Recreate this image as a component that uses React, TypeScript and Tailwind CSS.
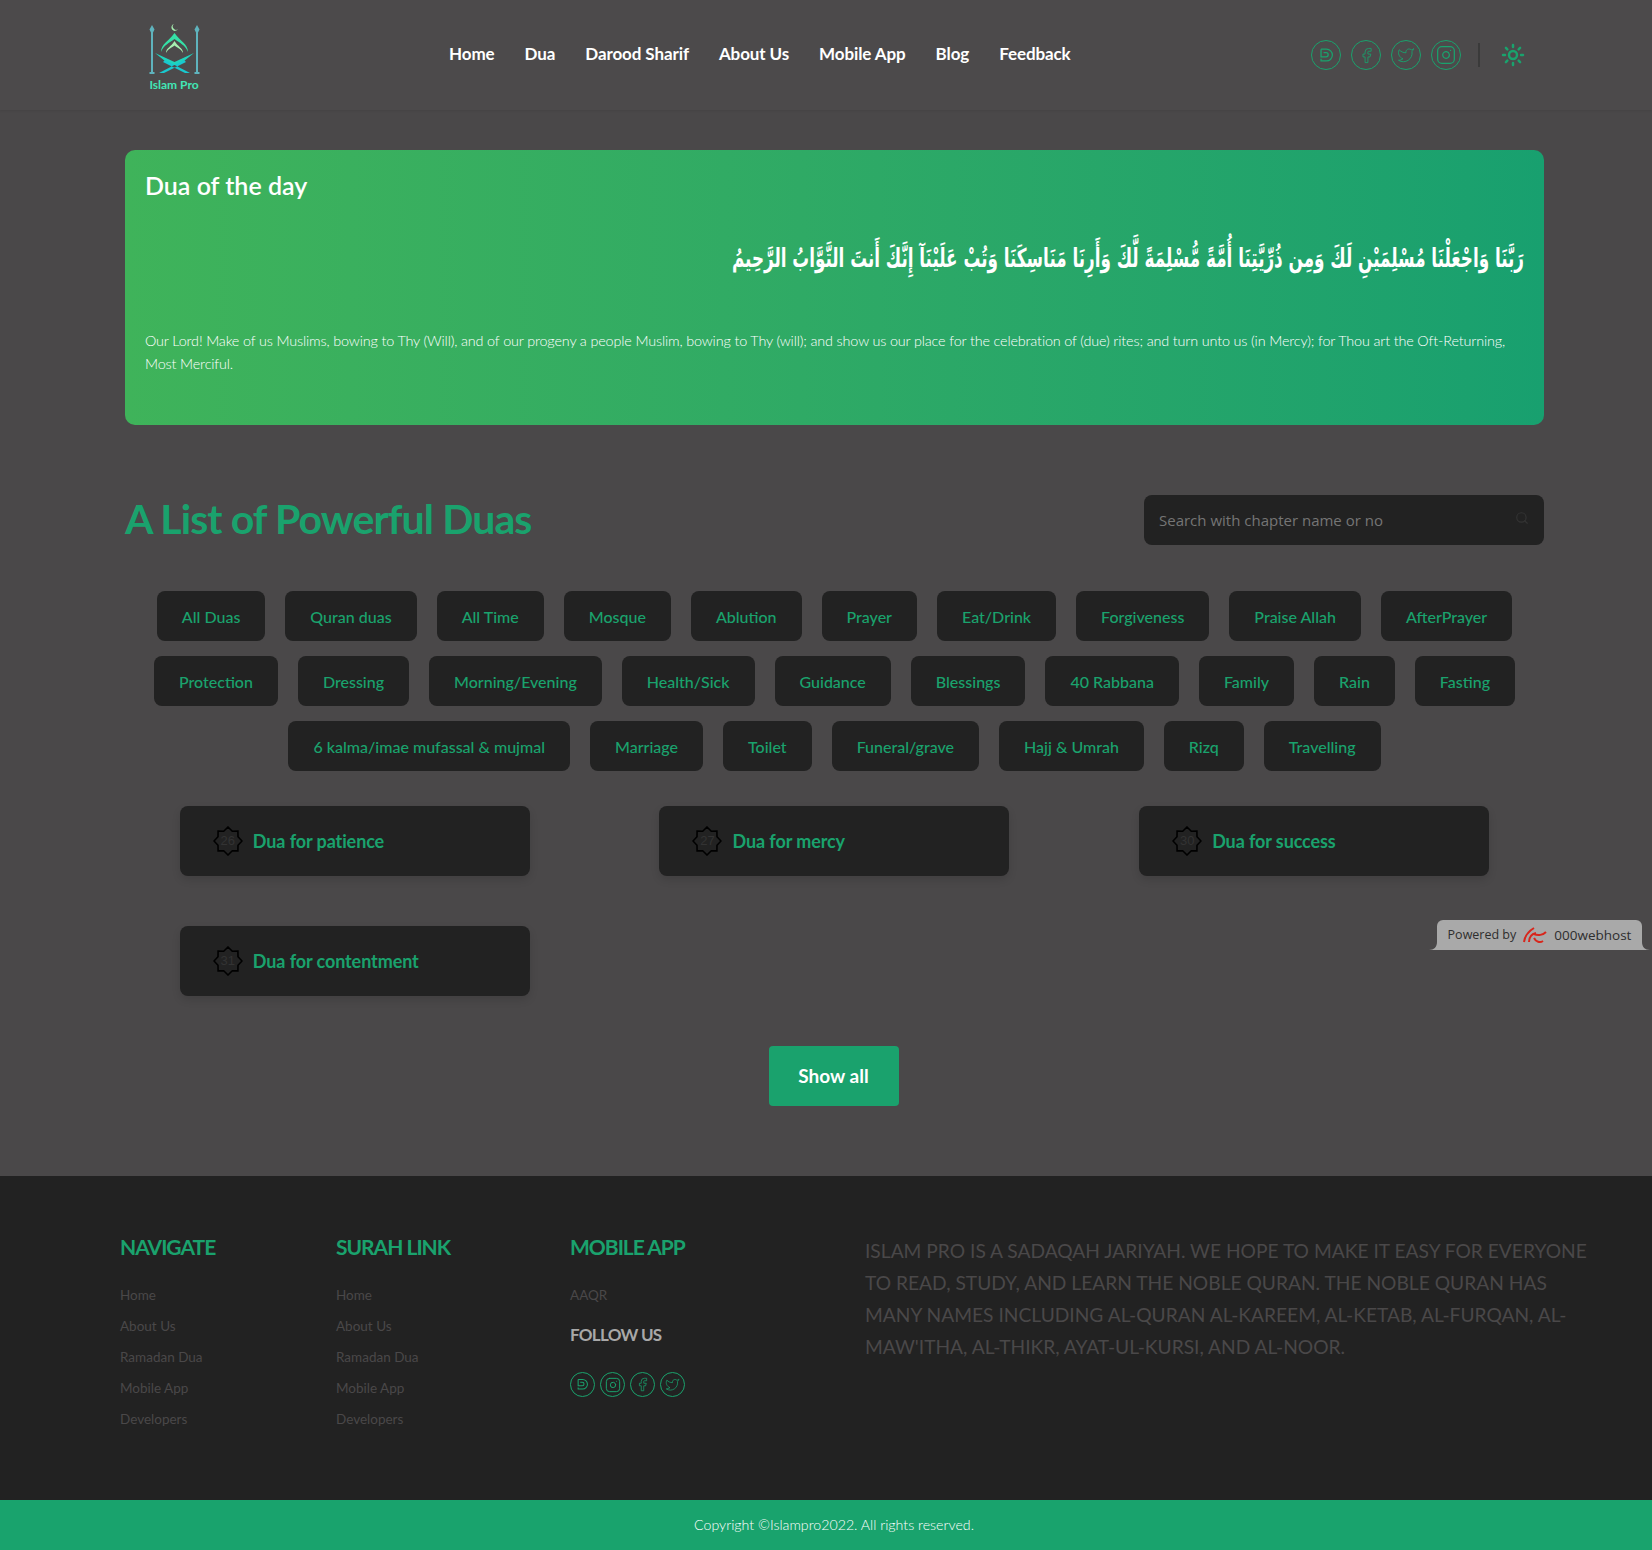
import { Facebook, Instagram, Search, Sun, Twitter } from "lucide-react";

const navLinks = ["Home", "Dua", "Darood Sharif", "About Us", "Mobile App", "Blog", "Feedback"];

const tabRows = [
  ["All Duas", "Quran duas", "All Time", "Mosque", "Ablution", "Prayer", "Eat/Drink", "Forgiveness", "Praise Allah", "AfterPrayer"],
  ["Protection", "Dressing", "Morning/Evening", "Health/Sick", "Guidance", "Blessings", "40 Rabbana", "Family", "Rain", "Fasting"],
  ["6 kalma/imae mufassal & mujmal", "Marriage", "Toilet", "Funeral/grave", "Hajj & Umrah", "Rizq", "Travelling"],
];

const duas = [
  { no: 26, title: "Dua for patience" },
  { no: 27, title: "Dua for mercy" },
  { no: 30, title: "Dua for success" },
  { no: 31, title: "Dua for contentment" },
];

const footerLinks = ["Home", "About Us", "Ramadan Dua", "Mobile App", "Developers"];

const DevIcon = () => (
  <svg viewBox="0 0 24 24" className="h-[72%] w-[72%]" fill="none" stroke="currentColor" strokeWidth="1.500">
    <path d="M6 5h6.500a7 7 0 0 1 0 14H6v-2.500M6 5v9h6a2.500 2.500 0 0 0 0-5H9" />
  </svg>
);

const Circle = ({ size, children }: { size: string; children: React.ReactNode }) => (
  <span className={`flex items-center justify-center rounded-full border border-[#1aa26d] text-[#1aa26d] ${size}`}>
    {children}
  </span>
);

const Logo = () => (
  <div className="mt-[6px] flex w-[56px] flex-col items-center">
    <svg viewBox="0 0 56 50" className="h-[50px] w-[56px]" fill="none">
      <path d="M6 1l2.500 4.500-1.500 3V48h1.500v2h-5v-2H5V8.500L3.500 5.500z" fill="#5fb3bd" />
      <path d="M51 1l2.500 4.500-1.500 3V48h1.500v2h-5v-2H50V8.500L48.500 5.500z" fill="#5fb3bd" />
      <path d="M28 0a3.500 3.500 0 1 0 4 5 3 3 0 0 1-4-5z" fill="#a6efb0" />
      <path d="M15 28c0-8 8-11 13.500-19C34 17 42 20 42 28c-3-7-8-9-13.500-13C23 19 18 21 15 28z" fill="#35e0a6" />
      <path d="M20 29c0-5 5-6 8.500-12C32 23 37 24 37 29c-2-4-5-5-8.500-7.500C25 24 22 25 20 29z" fill="#a6efb0" />
      <path d="M9 29l19.500 9L48 29l-15 12h-9z" fill="#1fd4bd" />
      <path d="M13 49l25-13 2 2-22 11zM44 49L19 36l-2 2 22 11z" fill="#19c8cf" />
    </svg>
    <span className="mt-[4px] text-[12px] leading-[14px] font-bold text-[#42e6b5]">Islam Pro</span>
  </div>
);

const StarBadge = ({ no }: { no: number }) => (
  <span className="relative flex h-[30px] w-[30px] items-center justify-center">
    <svg viewBox="0 0 30 30" className="absolute inset-0 h-full w-full" fill="none" stroke="#000" strokeWidth="1.600">
      <path d="M15 1l4.300 4.200 5.600-.1.100 5.600L29 15l-4 4.300-.100 5.600-5.600-.1L15 29l-4.300-4.200-5.600.1-.1-5.600L1 15l4-4.300.1-5.600 5.600.1z" />
    </svg>
    <span className="font-['Liberation_Sans',sans-serif] text-[13px] text-[#333]">{no}</span>
  </span>
);

const FooterColumn = ({ title, width }: { title: string; width: string }) => (
  <div className={width}>
    <h4 className="text-[21px] leading-[30px] font-bold tracking-[-1px] text-[#1aa26d] uppercase">{title}</h4>
    <ul className="mt-[23px] flex flex-col gap-[11px]">
      {footerLinks.map((link) => (
        <li key={link} className="text-[13.500px] leading-[20px] text-[#4a4849]">{link}</li>
      ))}
    </ul>
  </div>
);

export default function App() {
  return (
    <div className="relative min-h-[1550px] bg-[#4a4849] font-['Lato',sans-serif] text-white">
      <header className="flex h-[110px] items-center bg-[#4c4a4b] pr-[127px] pl-[146px] shadow-[0_1px_2px_rgba(0,0,0,0.08)]">
        <Logo />
        <nav className="-mt-[2px] ml-[247px] flex gap-[30px]">
          {navLinks.map((link) => (
            <a key={link} className="text-[17px] font-bold tracking-[-0.1px] text-white">{link}</a>
          ))}
        </nav>
        <div className="ml-auto flex items-center">
          <div className="flex gap-[10px]">
            <Circle size="h-[30px] w-[30px]"><DevIcon /></Circle>
            <Circle size="h-[30px] w-[30px]"><Facebook size={17} strokeWidth={1.2} /></Circle>
            <Circle size="h-[30px] w-[30px]"><Twitter size={18} strokeWidth={1.2} /></Circle>
            <Circle size="h-[30px] w-[30px]"><Instagram size={20} strokeWidth={1.5} /></Circle>
          </div>
          <span className="mr-[21px] ml-[17px] h-[24px] w-[2px] bg-[#3a3a3a]" />
          <Sun size={24} strokeWidth={2.500} className="text-[#1aa26d]" />
        </div>
      </header>

      <main className="pt-[40px] pr-[108px] pl-[125px]">
        <section className="h-[275px] rounded-[10px] bg-gradient-to-r from-[#3fb35a] to-[#18a06f] px-[20px] pt-[19px]">
          <h2 className="text-[25px] leading-[32px] font-semibold">Dua of the day</h2>
          <div className="mt-[33px] flex h-[48px] origin-right scale-x-[0.717] justify-start">
            <p dir="rtl" className="w-full font-['DejaVu_Sans_Condensed','DejaVu_Sans',serif] text-[26px] leading-[48px] font-bold whitespace-nowrap">
              رَبَّنَا وَاجْعَلْنَا مُسْلِمَيْنِ لَكَ وَمِن ذُرِّيَّتِنَا أُمَّةً مُّسْلِمَةً لَّكَ وَأَرِنَا مَنَاسِكَنَا وَتُبْ عَلَيْنَآ إِنَّكَ أَنتَ التَّوَّابُ الرَّحِيمُ
            </p>
          </div>
          <p className="mt-[47px] text-[14.400px] leading-[23px] font-light tracking-[-0.15px]">
            Our Lord! Make of us Muslims, bowing to Thy (Will), and of our progeny a people Muslim, bowing to Thy (will); and show us our place for the celebration of (due) rites; and turn unto us (in Mercy); for Thou art the Oft-Returning,<br />Most Merciful.
          </p>
        </section>

        <div className="mt-[70px] flex h-[50px] items-center justify-between">
          <h1 className="-mt-[2px] text-[41px] leading-[50px] font-bold tracking-[-0.9px] text-[#1aa26d]">A List of Powerful Duas</h1>
          <div className="flex h-[50px] w-[400px] items-center justify-between rounded-[8px] bg-[#222222] px-[15px]">
            <span className="font-['Open_Sans',sans-serif] text-[15px] text-[#757575]">Search with chapter name or no</span>
            <Search size={14} className="mb-[4px] text-[#333]" />
          </div>
        </div>

        <div className="mt-[46px] flex flex-col gap-[15px]">
          {tabRows.map((row, i) => (
            <div key={i} className="flex justify-center gap-[20px]">
              {row.map((tab) => (
                <button key={tab} className="h-[50px] rounded-[8px] bg-[#222222] px-[25px] pt-[1px] text-[16px] font-medium whitespace-nowrap text-[#1aa26d]">
                  {tab}
                </button>
              ))}
            </div>
          ))}
        </div>

        <div className="-mx-[10px] mt-[35px] grid grid-cols-3 gap-y-[50px]">
          {duas.map((dua) => (
            <div key={dua.no} className="flex justify-center">
              <div className="flex h-[70px] w-[350px] items-center gap-[10px] rounded-[8px] bg-[#222222] pl-[33px] shadow-[0_4px_8px_rgba(0,0,0,0.12)]">
                <StarBadge no={dua.no} />
                <span className="text-[18px] font-bold tracking-[-0.1px] text-[#1aa26d]">{dua.title}</span>
              </div>
            </div>
          ))}
        </div>

        <div className="mt-[50px] flex justify-center pr-[2px]">
          <button className="h-[60px] w-[130px] rounded-[4px] bg-[#1aa26d] text-[19px] font-bold text-white">Show all</button>
        </div>
      </main>

      <footer className="mt-[70px] h-[324px] bg-[#222222] pt-[56px] pl-[120px]">
        <div className="flex">
          <FooterColumn title="Navigate" width="w-[216px]" />
          <FooterColumn title="Surah Link" width="w-[234px]" />
          <div className="w-[295px]">
            <h4 className="text-[21px] leading-[30px] font-bold tracking-[-1px] text-[#1aa26d] uppercase">Mobile App</h4>
            <p className="mt-[23px] text-[13.500px] leading-[20px] text-[#4a4849]">AAQR</p>
            <h5 className="mt-[18px] text-[17px] leading-[24px] font-bold tracking-[-0.7px] text-[#a8a8a8] uppercase">Follow Us</h5>
            <div className="mt-[25px] flex gap-[5px]">
              <Circle size="h-[25px] w-[25px]"><DevIcon /></Circle>
              <Circle size="h-[25px] w-[25px]"><Instagram size={16} strokeWidth={1.5} /></Circle>
              <Circle size="h-[25px] w-[25px]"><Facebook size={15} strokeWidth={1.2} /></Circle>
              <Circle size="h-[25px] w-[25px]"><Twitter size={15} strokeWidth={1.2} /></Circle>
            </div>
          </div>
          <p className="mt-[3px] w-[726px] text-[19.200px] leading-[32px] text-[#4a4849] uppercase">
            Islam Pro is a Sadaqah Jariyah. We hope to make it easy for everyone to read, study, and learn the Noble Quran. The Noble Quran has many names including Al-Quran Al-Kareem, Al-Ketab, Al-Furqan, Al-Maw'itha, Al-Thikr, Ayat-ul-Kursi, and Al-Noor.
          </p>
        </div>
      </footer>
      <div className="flex h-[50px] items-center justify-center bg-[#19a36d] pl-[16px] text-[14.200px] font-light text-white">
        Copyright ©Islampro2022. All rights reserved.
      </div>

      <div className="absolute top-[920px] right-[10px] flex h-[30px] w-[205px] items-center justify-center gap-[7px] rounded-t-[6px] bg-[#a9a9a9] font-['Open_Sans',sans-serif] text-[12.500px] text-[#2e2e2e]">
        <svg viewBox="0 0 8 8" className="absolute bottom-0 -left-[8px] h-[8px] w-[8px]">
          <path d="M0 8C5 8 8 5 8 0v8z" fill="#a9a9a9" />
        </svg>
        <svg viewBox="0 0 8 8" className="absolute -right-[8px] bottom-0 h-[8px] w-[8px]">
          <path d="M8 8C3 8 0 5 0 0v8z" fill="#a9a9a9" />
        </svg>
        <span>Powered by</span>
        <svg viewBox="0 0 24 20" className="h-[20px] w-[24px]" fill="none" stroke="#d8261c" strokeWidth="2">
          <path d="M1 17C2 10 6 6 11 3M6 17c0-5 3-8 7-9M23 7c-3 3-8 4-12 2M11 13c2 4 6 5 9 3" />
        </svg>
        <span className="text-[13.500px]">000webhost</span>
      </div>
    </div>
  );
}
